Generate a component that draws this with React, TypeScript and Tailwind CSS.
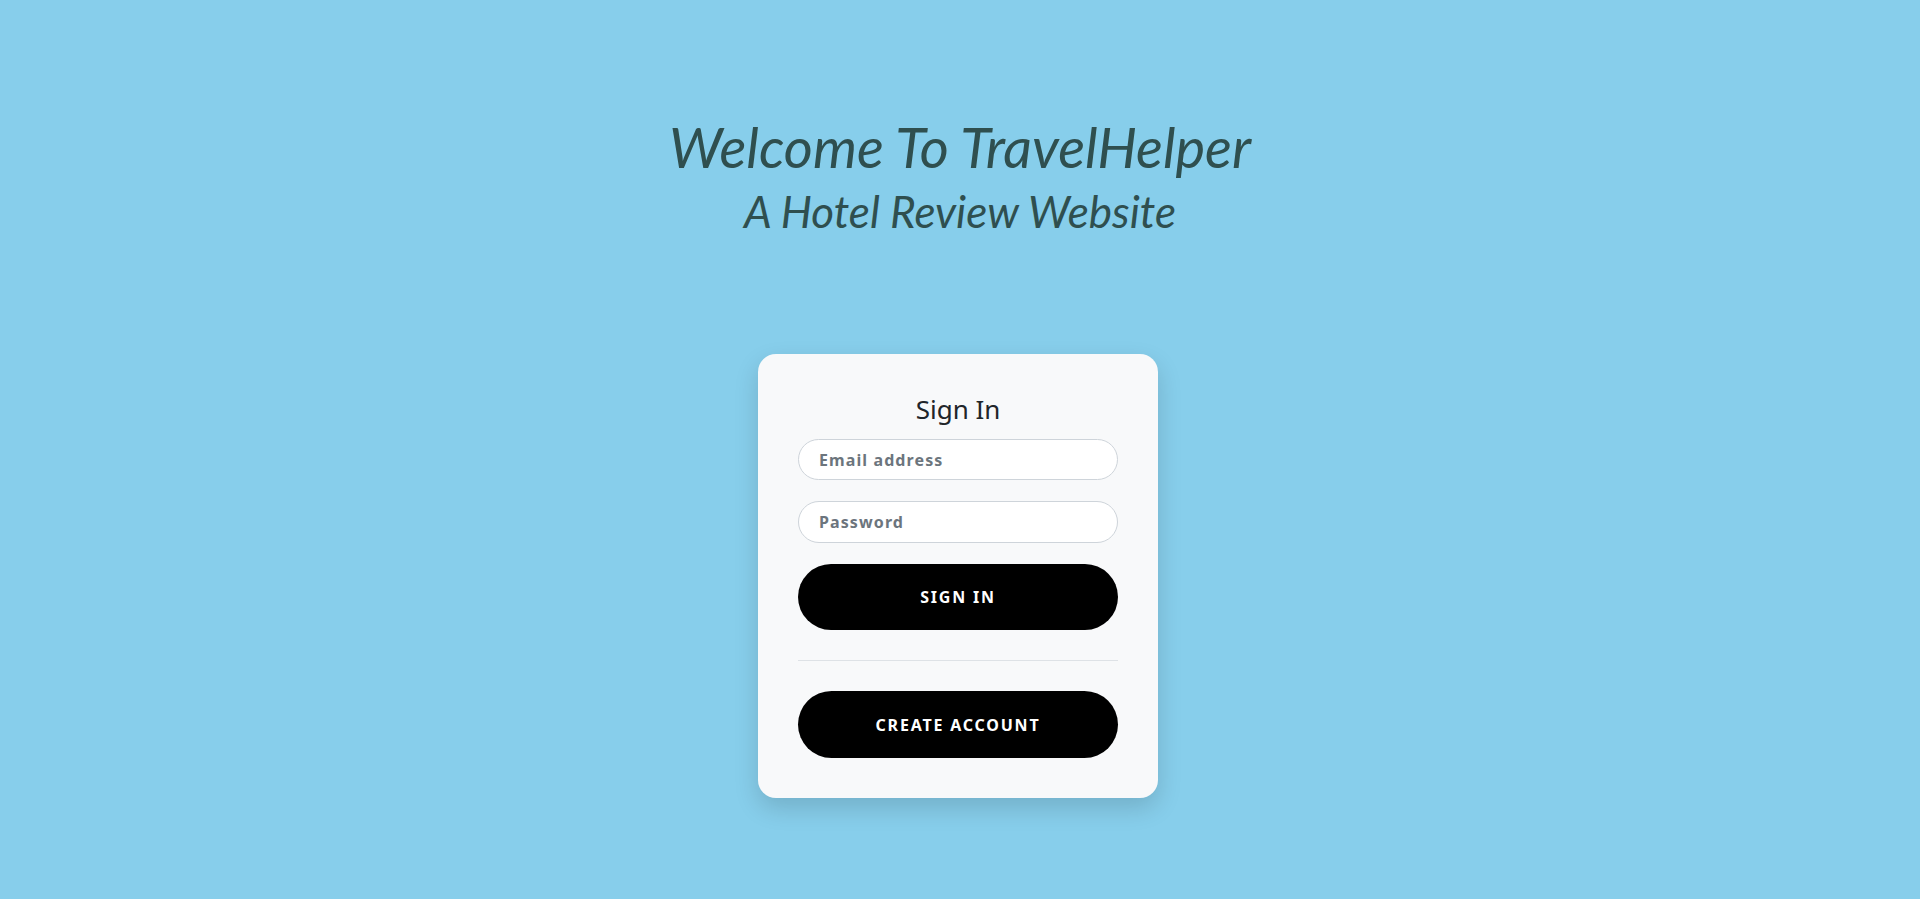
export default function App() {
  return (
    <div className="min-h-[899px] w-full bg-[#87ceeb] flex flex-col items-center pt-[113px] font-['Noto_Sans',sans-serif]">
      <h1 className="m-0 text-[56px] leading-[1.2] italic font-normal text-[#2f4f4f] font-['Lato',sans-serif]">
        Welcome To TravelHelper
      </h1>
      <h2 className="m-0 mt-[5px] text-[44px] leading-[1.2] italic font-normal text-[#2f4f4f] font-['Lato',sans-serif]">
        A Hotel Review Website
      </h2>

      <div className="mt-[116px] mr-1 w-[400px] rounded-[18px] bg-[#f8f9fa] p-10 shadow-[0_10px_25px_rgba(0,0,0,0.15)]">
        <h3 className="m-0 mb-[14px] text-center text-[26px] leading-[1.2] font-normal text-[#212529]">Sign In</h3>
        <form className="flex flex-col" onSubmit={(e) => e.preventDefault()}>
          <input
            type="email"
            placeholder="Email address"
            className="h-[41px] w-full rounded-full border border-[#ced4da] bg-white px-5 text-[16px] font-bold tracking-[1.1px] text-[#212529] placeholder:text-[#6c757d] outline-none"
          />
          <input
            type="password"
            placeholder="Password"
            className="mt-[21px] h-[42px] w-full rounded-full border border-[#ced4da] bg-white px-5 text-[16px] font-bold tracking-[1.1px] text-[#212529] placeholder:text-[#6c757d] outline-none"
          />
          <button
            type="submit"
            className="mt-[21px] h-[66px] w-full rounded-full bg-black text-[16px] font-bold uppercase tracking-[1.8px] text-white"
          >
            Sign In
          </button>
        </form>
        <hr className="my-[30px] border-0 border-t border-[#dee2e6]" />
        <button
          type="button"
          className="h-[67px] w-full rounded-full bg-black text-[16px] font-bold uppercase tracking-[1.8px] text-white"
        >
          Create Account
        </button>
      </div>
    </div>
  );
}
